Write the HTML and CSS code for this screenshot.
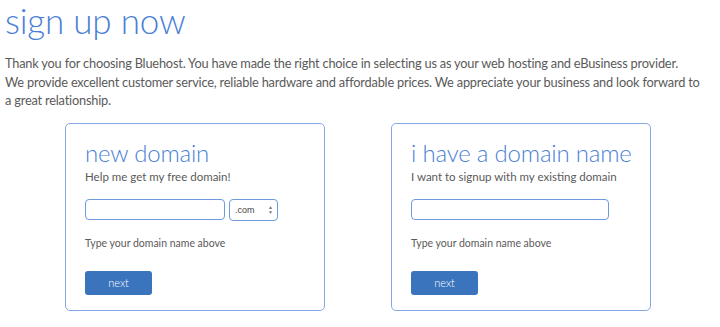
FILE: index.html
```html
<!DOCTYPE html>
<html lang="en">

<head>
    <meta charset="UTF-8">
    <meta name="viewport" content="width=device-width, initial-scale=1.0">
    <title>Sign up now</title>
    <link rel="stylesheet" href="styles.css">
</head>

<body>
    <h1>sign up now</h1>
    <p class="intro">Thank you for choosing Bluehost. You have made the right choice in selecting us as your web hosting and eBusiness provider.<br>
        We provide excellent customer service, reliable hardware and affordable prices. We appreciate your business and look forward to<br>
        a great relationship.</p>

    <div class="boxes">
        <div class="box">
            <h2>new domain</h2>
            <p class="sub">Help me get my free domain!</p>
            <div class="row">
                <input type="text" class="domain">
                <div class="select">.com <span class="arrows">&#9650;<br>&#9660;</span></div>
            </div>
            <p class="hint">Type your domain name above</p>
            <button>next</button>
        </div>
        <div class="box">
            <h2>i have a domain name</h2>
            <p class="sub">I want to signup with my existing domain</p>
            <div class="row">
                <input type="text" class="domain wide">
            </div>
            <p class="hint">Type your domain name above</p>
            <button>next</button>
        </div>
    </div>
</body>

</html>
```

FILE: styles.css
```css
body {
    font-family: Lato, "Open Sans", sans-serif;
    margin: 0;
    padding: 0 5px;
    background: white;
    color: #5a5a5a;
}

h1 {
    font-weight: 300;
    font-size: 35px;
    color: #4b7fd6;
    margin: 0;
    line-height: 40px;
    letter-spacing: -0.2px;
}

.intro {
    font-size: 12.8px;
    line-height: 18.5px;
    margin: 14px 0 0;
    letter-spacing: -0.2px;
    white-space: nowrap;
}

.boxes {
    display: flex;
    gap: 66px;
    margin: 13px 0 0 60px;
}

.box {
    width: 239px;
    height: 186px;
    border: 1.5px solid #86a9e6;
    border-radius: 5px;
    padding: 0 0 0 19px;
    box-sizing: content-box;
}

h2 {
    font-weight: 300;
    font-size: 24px;
    color: #4b7fd6;
    margin: 15px 0 0;
    line-height: 28px;
    letter-spacing: -0.2px;
}

.sub {
    font-size: 11.5px;
    margin: 2px 0 0;
    line-height: 16px;
}

.row {
    display: flex;
    gap: 4px;
    margin-top: 14px;
    height: 22px;
}

.domain {
    width: 140px;
    height: 21px;
    box-sizing: border-box;
    border: 1px solid #6f9ae0;
    border-radius: 4px;
    margin: 0;
    padding: 0 5px;
}

.domain.wide {
    width: 198px;
}

.select {
    width: 49px;
    height: 22px;
    box-sizing: border-box;
    border: 1px solid #6f9ae0;
    border-radius: 4px;
    font-family: "Liberation Sans", Arial, sans-serif;
    font-size: 9px;
    color: #444;
    display: flex;
    align-items: center;
    justify-content: space-between;
    padding: 0 4px 0 5px;
}

.arrows {
    font-size: 5px;
    line-height: 5px;
    color: #777;
}

.hint {
    font-size: 10.5px;
    margin: 14px 0 0;
    line-height: 16px;
}

button {
    margin-top: 20px;
    width: 67px;
    height: 24px;
    border: none;
    border-radius: 3px;
    background-color: #3a74bd;
    color: white;
    font-family: Lato, sans-serif;
    font-weight: 300;
    font-size: 11px;
    cursor: pointer;
}
```
